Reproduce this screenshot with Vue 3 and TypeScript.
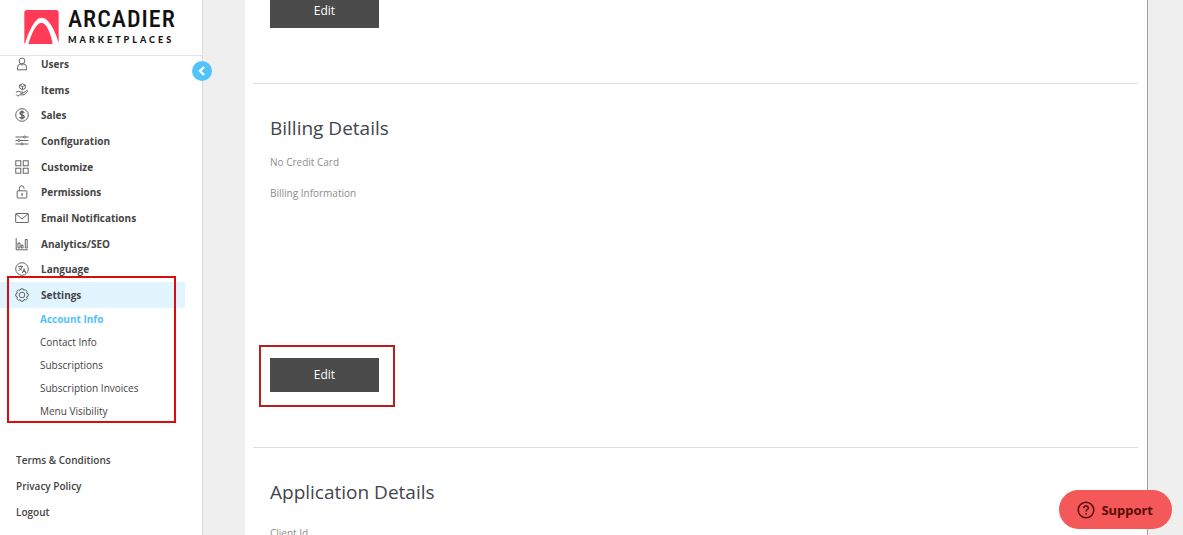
<script setup lang="ts">
interface MenuItem {
  label: string
  icon: string
  active?: boolean
}

const menu: MenuItem[] = [
  { label: 'Users', icon: 'users' },
  { label: 'Items', icon: 'items' },
  { label: 'Sales', icon: 'sales' },
  { label: 'Configuration', icon: 'config' },
  { label: 'Customize', icon: 'customize' },
  { label: 'Permissions', icon: 'lock' },
  { label: 'Email Notifications', icon: 'mail' },
  { label: 'Analytics/SEO', icon: 'chart' },
  { label: 'Language', icon: 'language' },
  { label: 'Settings', icon: 'gear', active: true },
]

const settings = ['Account Info', 'Contact Info', 'Subscriptions', 'Subscription Invoices', 'Menu Visibility']
const links = ['Terms & Conditions', 'Privacy Policy', 'Logout']
</script>

<template>
  <div class="app">
    <aside class="sidebar">
      <header class="brand">
        <svg class="mark" viewBox="0 0 102 101" aria-hidden="true">
          <path class="mark-fill" d="M0 101V8Q0 0 8 0H94Q102 0 102 8V97C92 62 72 23 52 23C32 22 14 62 3 97Z" />
          <path class="mark-fill" d="M12 101C22 68 36 38 51 38C65 38 78 68 84 101Z" />
        </svg>
        <div class="wordmark">
          <span class="word-top">ARCADIER</span>
          <span class="word-sub">MARKETPLACES</span>
        </div>
      </header>
      <button class="collapse" type="button" aria-label="Collapse menu">
        <svg viewBox="0 0 20 20" aria-hidden="true"><path d="M12 6L8 10L12 14" /></svg>
      </button>

      <nav>
        <ul class="menu">
          <li v-for="item in menu" :key="item.label" :class="{ active: item.active }">
            <a href="#">
              <svg class="icon" viewBox="0 0 14 14" aria-hidden="true">
                <template v-if="item.icon === 'users'">
                  <circle cx="7" cy="4" r="2.9" />
                  <path d="M2.5 12.8V10.5Q2.5 7.4 5.2 7L7 8.2L8.8 7Q11.5 7.4 11.5 10.5V12.8Z" />
                </template>
                <template v-else-if="item.icon === 'items'">
                  <path d="M7.5 .8L10.3 2.2V5.2L7.5 6.7L4.7 5.2V2.2ZM4.7 2.2L7.5 3.7L10.3 2.2M7.5 3.7V6.7" />
                  <path d="M1 9.2L3.5 8.3L5.5 9H8Q9 9.8 7.8 10.3H5.5M8.5 10L11.5 7.6Q13 7.4 12.5 8.5L9 11.8H4.5L2.8 13.2M1 11.4L2.8 13.2" />
                </template>
                <template v-else-if="item.icon === 'sales'">
                  <circle cx="7" cy="7" r="6.3" />
                  <path class="bold" d="M9.2 5Q8.8 3.7 7 3.7Q5 3.7 5 5.2Q5 6.5 7 6.9Q9.2 7.3 9.2 8.8Q9.2 10.3 7 10.3Q5 10.3 4.7 8.9M7 2.5V11.5" />
                </template>
                <template v-else-if="item.icon === 'config'">
                  <path d="M.5 3H8.5M10.5 3H13.5M.5 6.5H2.8M4.8 6.5H13.5M.5 10H6M8 10H13.5" />
                  <circle cx="9.5" cy="3" r="1" /><circle cx="3.8" cy="6.5" r="1" /><circle cx="7" cy="10" r="1" />
                </template>
                <template v-else-if="item.icon === 'customize'">
                  <rect x=".8" y=".8" width="5" height="5" /><rect x="8.2" y=".8" width="5" height="5" />
                  <rect x=".8" y="8.2" width="5" height="5" /><rect x="8.2" y="8.2" width="5" height="5" />
                </template>
                <template v-else-if="item.icon === 'lock'">
                  <rect x="2.2" y="5.8" width="9.6" height="7.2" rx=".6" />
                  <path d="M4.4 5.8V3.2Q4.4 .8 6.7 .8Q9 .8 9 3.2V3.8" />
                  <path class="bold" d="M7 8.3V10.8" />
                </template>
                <template v-else-if="item.icon === 'mail'">
                  <rect x=".7" y="2.5" width="12.6" height="9" rx=".5" />
                  <path d="M1 3L7 8L13 3" />
                </template>
                <template v-else-if="item.icon === 'chart'">
                  <path d="M1.2 1.2V12.8H13M3 11V6H5V11ZM6.3 11V8H8V11ZM10.3 11V2.5H12.2V11Z" />
                </template>
                <template v-else-if="item.icon === 'language'">
                  <circle cx="7" cy="7" r="6.3" />
                  <path d="M3.2 4.6H8M5.6 3.5V4.6M7.2 4.6Q6.5 7.5 3.5 8.6M4.2 5.8Q5 7.5 7 8.3M7.4 11L9.1 6.8L10.8 11M8 9.6H10.2" />
                </template>
                <template v-else>
                  <circle cx="7" cy="7" r="2.8" />
                  <path d="M5.9 .8H8.1L8.7 2.2L10.3 1.7L12 3.4L11.6 5L13.2 5.9V8.1L11.7 8.8L12.2 10.5L10.6 12.1L9 11.6L8.1 13.2H5.9L5.1 11.7L3.5 12.2L1.9 10.6L2.3 9L.8 8.1V5.9L2.2 5.2L1.8 3.5L3.4 1.9L5 2.3Z" />
                </template>
              </svg>
              {{ item.label }}
            </a>
          </li>
        </ul>
        <ul class="submenu">
          <li v-for="(label, i) in settings" :key="label">
            <a href="#" :class="{ current: i === 0 }">{{ label }}</a>
          </li>
        </ul>
        <ul class="links">
          <li v-for="label in links" :key="label"><a href="#">{{ label }}</a></li>
        </ul>
      </nav>
      <div class="marker marker-menu"></div>
    </aside>

    <main class="content">
      <div class="panel">
        <section class="block first">
          <button class="edit" type="button">Edit</button>
        </section>
        <section class="block billing">
          <h2>Billing Details</h2>
          <p>No Credit Card</p>
          <p>Billing Information</p>
          <div class="action">
            <button class="edit" type="button">Edit</button>
            <div class="marker marker-edit"></div>
          </div>
        </section>
        <section class="block application">
          <h2>Application Details</h2>
          <p>Client Id</p>
        </section>
      </div>
    </main>

    <button class="support" type="button">
      <svg viewBox="0 0 18 18" aria-hidden="true">
        <circle cx="9" cy="9" r="7.8" />
        <path d="M6.7 7.2Q6.7 5 9 5Q11.3 5 11.3 7Q11.3 8.2 10 8.9Q9 9.4 9 10.6M9 12V13.4" />
      </svg>
      Support
    </button>
  </div>
</template>

<style>
body {
  margin: 0;
  overflow: hidden;
}
</style>

<style scoped>
.app {
  display: flex;
  height: 100vh;
  overflow: hidden;
  background: #efefef;
  font-family: "Open Sans", "Noto Sans", sans-serif;
  font-size: 10px;
  color: #444;
}
a {
  color: inherit;
  text-decoration: none;
}
ul {
  list-style: none;
  margin: 0;
  padding: 0;
}
.sidebar {
  position: relative;
  flex: none;
  width: 202px;
  background: #fff;
  border-right: 1px solid #dcdcdc;
}
.brand {
  position: relative;
  z-index: 1;
  display: flex;
  gap: 9px;
  box-sizing: border-box;
  height: 56px;
  padding: 10px 0 0 24px;
  background: #fff;
  border-bottom: 1px solid #e4e4e4;
}
.mark {
  width: 35px;
  height: 34px;
}
.mark-fill {
  fill: #ff3b57;
}
.wordmark {
  display: flex;
  flex-direction: column;
  color: #111;
}
.word-top {
  font: 500 24px/18px "Roboto Condensed", "Open Sans Condensed", "Liberation Sans Narrow", sans-serif;
  letter-spacing: 1px;
}
.word-sub {
  margin-top: 5px;
  font: 900 9px/14px Lato, sans-serif;
  letter-spacing: 3px;
}
.collapse {
  position: absolute;
  z-index: 2;
  top: 61px;
  right: -10px;
  width: 20px;
  height: 20px;
  padding: 0;
  border: 0;
  border-radius: 50%;
  background: #4fc3fa;
}
.collapse svg {
  display: block;
  fill: none;
  stroke: #fff;
  stroke-width: 2.4;
}
.menu {
  display: grid;
  grid-auto-rows: 1fr;
  height: 257px;
  margin-top: -5px;
  font-weight: 700;
}
.menu li {
  display: flex;
  margin-right: 17px;
}
.menu a {
  display: flex;
  flex: 1;
  align-items: center;
  gap: 12px;
  padding-left: 15px;
}
.menu .active {
  background: #e0f5ff;
}
.icon {
  width: 14px;
  height: 14px;
  fill: none;
  stroke: #555;
  stroke-width: 0.9;
}
.icon .bold {
  stroke-width: 1.3;
}
.submenu {
  line-height: 23px;
  padding-left: 40px;
}
.submenu .current {
  color: #4fc3fa;
  font-weight: 700;
}
.links {
  margin-top: 24px;
  padding-left: 16px;
  line-height: 26px;
  font-weight: 600;
}
.marker {
  position: absolute;
  box-sizing: border-box;
  pointer-events: none;
}
.marker-menu {
  top: 276px;
  left: 7px;
  width: 169px;
  height: 147px;
  border: 2px solid #d90d0d;
}
.marker-edit {
  inset: -13px -16px -15px -11px;
  border: 2px solid #b8201f;
}
.content {
  flex: 1;
  padding: 0 35px 0 42px;
}
.panel {
  box-sizing: border-box;
  height: 100%;
  padding: 0 9px 0 8px;
  overflow: hidden;
  background: #fff;
  border-right: 1px solid #a0a0a0;
}
.block {
  padding: 29px 17px 0;
}
.first {
  box-sizing: border-box;
  height: 90px;
  margin-top: -6px;
  padding-top: 0;
  border-bottom: 1px solid #dedede;
}
.billing {
  padding-bottom: 55px;
  border-bottom: 1px solid #dedede;
}
h2 {
  margin: 0 0 11px;
  font-size: 19px;
  line-height: 30px;
  font-weight: 400;
  color: #42454c;
}
.application h2 {
  margin-bottom: 18px;
}
p {
  margin: 0 0 15px;
  line-height: 16px;
  color: #8e8e8e;
}
.action {
  position: relative;
  width: 109px;
  margin-top: 157px;
}
.edit {
  display: block;
  width: 109px;
  height: 34px;
  padding: 0;
  border: 0;
  background: #4b4b4b;
  color: #fff;
  font: 400 12px/34px "Open Sans", sans-serif;
}
.support {
  position: fixed;
  right: 11px;
  bottom: 6px;
  display: flex;
  align-items: center;
  gap: 6px;
  height: 39px;
  padding: 0 19px 0 18px;
  border: 0;
  border-radius: 20px;
  background: #f45858;
  color: #5a0c0c;
  font: 700 13px/20px "Noto Sans", sans-serif;
}
.support svg {
  width: 18px;
  height: 18px;
  fill: none;
  stroke: #5a0c0c;
  stroke-width: 1.6;
}
</style>
